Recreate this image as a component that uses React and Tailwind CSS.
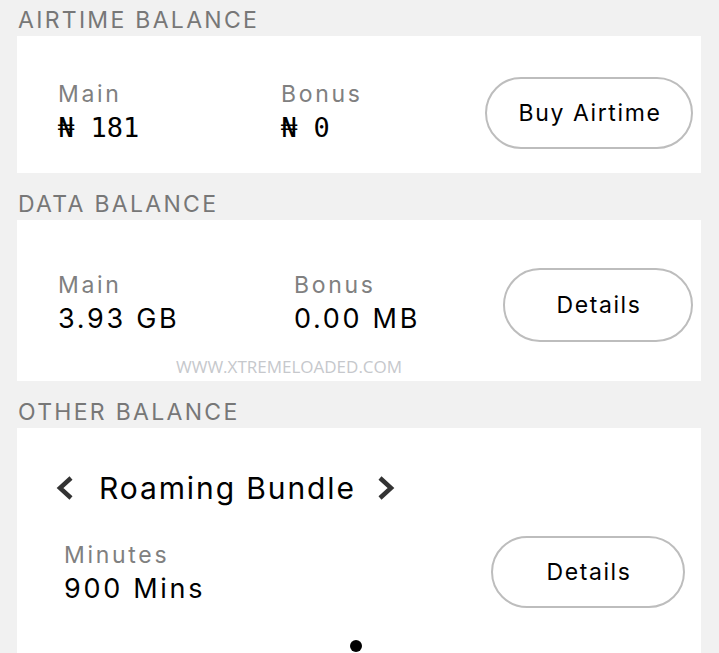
const font = { fontFamily: 'Inter, "Open Sans", sans-serif' };

function Header({ children, h }) {
  return (
    <div className={`flex items-end pl-px ${h}`}>
      <span className="pb-[4px] text-[23px] leading-none tracking-[2.3px] text-[#777]">{children}</span>
    </div>
  );
}

function Pill({ children, w, h = 'h-[72px]' }) {
  return (
    <button
      className={`${w} ${h} shrink-0 rounded-full border-2 border-[#bdbdbd] bg-white pl-[2px] text-[23px] tracking-[1.6px] text-black`}
    >
      {children}
    </button>
  );
}

function Stat({ label, value, w, mono }) {
  return (
    <div className={`${w} shrink-0`}>
      <div className="text-[23px] leading-[34px] tracking-[2.7px] text-[#808080]">{label}</div>
      <div
        className={`text-[27px] leading-[34px] text-black ${mono ? 'font-["DejaVu_Sans_Mono",monospace]' : 'tracking-[2.7px]'}`}
      >
        {value}
      </div>
    </div>
  );
}

function Chevron({ dir }) {
  return (
    <svg width="20" height="26" viewBox="0 0 20 26" className="shrink-0">
      <polyline
        points={dir === 'left' ? '16,3 5,13 16,23' : '4,3 15,13 4,23'}
        fill="none"
        stroke="#333"
        strokeWidth="4.5"
        strokeLinejoin="miter"
      />
    </svg>
  );
}

export default function App() {
  return (
    <div className="min-h-[653px] overflow-hidden bg-[#f1f1f1] pr-[18px] pl-[17px]" style={font}>
      <Header h="h-[36px]">AIRTIME BALANCE</Header>
      <div className="flex items-start bg-white pt-[41px] pr-[8px] pb-[24px] pl-[41px]">
        <Stat label="Main" value="₦ 181" w="w-[223px]" mono />
        <Stat label="Bonus" value="₦ 0" w="w-[150px]" mono />
        <div className="ml-auto">
          <Pill w="w-[208px]">Buy Airtime</Pill>
        </div>
      </div>

      <Header h="h-[47px]">DATA BALANCE</Header>
      <div className="h-[161px] bg-white pt-[48px] pr-[8px] pl-[41px]">
        <div className="flex items-start">
          <Stat label="Main" value="3.93 GB" w="w-[236px]" />
          <Stat label="Bonus" value="0.00 MB" w="w-[150px]" />
          <div className="ml-auto">
            <Pill w="w-[190px]" h="h-[74px]">Details</Pill>
          </div>
        </div>
        <div
          className="mt-[15px] pl-[118px] text-[17px] leading-[20px] text-[#c6c8cc]"
          style={{ fontFamily: '"Open Sans", sans-serif' }}
        >
          WWW.XTREMELOADED.COM
        </div>
      </div>

      <Header h="h-[47px]">OTHER BALANCE</Header>
      <div className="h-[240px] bg-white pt-[42px] pr-[16px] pl-[38px]">
        <div className="flex items-center">
          <Chevron dir="left" />
          <span className="mr-[20px] ml-[24px] text-[30px] leading-[36px] tracking-[1.9px] text-black">
            Roaming Bundle
          </span>
          <Chevron dir="right" />
        </div>
        <div className="mt-[32px] flex items-start pl-[9px]">
          <Stat label="Minutes" value="900 Mins" w="w-[300px]" />
          <div className="mt-[-2px] ml-auto">
            <Pill w="w-[194px]">Details</Pill>
          </div>
        </div>
        <div className="mt-[32px] ml-[295px] h-[12px] w-[12px] rounded-full bg-black" />
      </div>
    </div>
  );
}
